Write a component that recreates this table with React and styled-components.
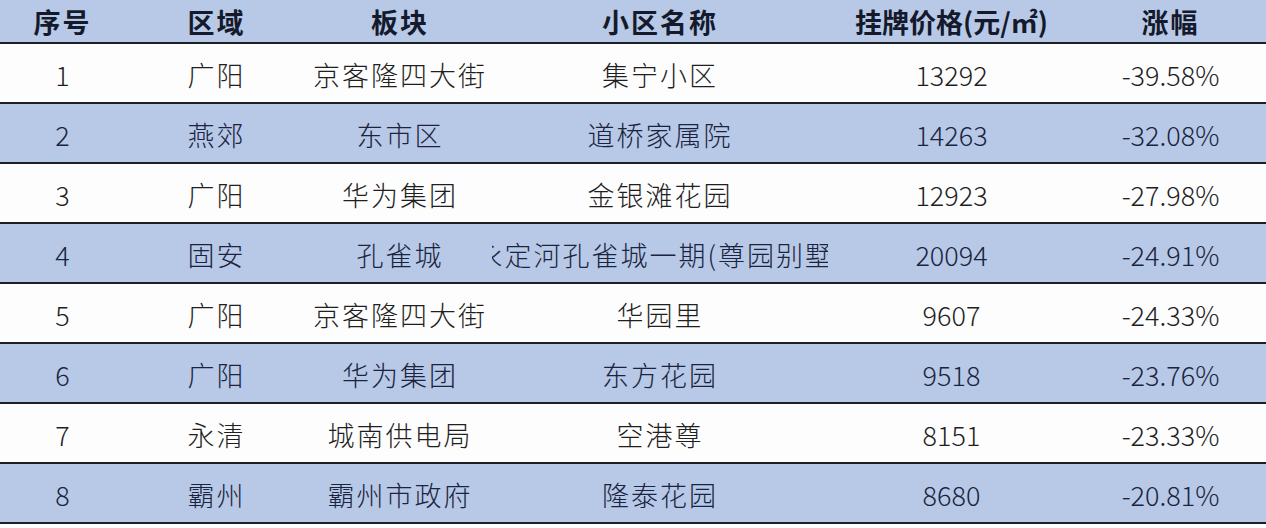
import React from 'react';
import styled, { createGlobalStyle } from 'styled-components';

const GlobalStyle = createGlobalStyle`
  html, body {
    margin: 0;
    padding: 0;
    background: #ffffff;
  }
  body {
    font-family: "Noto Sans CJK SC", "Noto Sans", sans-serif;
  }
`;

const Table = styled.div`
  width: 1266px;
  display: flex;
  flex-direction: column;
`;

const Row = styled.div`
  display: grid;
  grid-template-columns: 125px 183px 184px 336px 247px 191px;
  height: ${(p) => (p.header ? '42px' : '58px')};
  border-bottom: 2px solid #1e1f24;
  background: ${(p) => (p.blue ? '#b7c9e6' : '#fdfdfd')};
  color: ${(p) => (p.header ? '#141a2c' : p.blue ? '#1a2440' : '#1f1f1f')};
  font-weight: ${(p) => (p.header ? 700 : 300)};
`;

const Cell = styled.div`
  display: flex;
  align-items: center;
  justify-content: center;
  overflow: hidden;
  white-space: nowrap;
  font-size: 27px;
  letter-spacing: ${(p) => (p.num ? '0' : '2px')};
  padding-top: ${(p) => (p.up ? '0' : '2px')};
  box-sizing: border-box;
`;

const Inner = styled.span`
  flex-shrink: 0;
`;

const headers = ['序号', '区域', '板块', '小区名称', '挂牌价格(元/㎡)', '涨幅'];

const rows = [
  ['1', '广阳', '京客隆四大街', '集宁小区', '13292', '-39.58%'],
  ['2', '燕郊', '东市区', '道桥家属院', '14263', '-32.08%'],
  ['3', '广阳', '华为集团', '金银滩花园', '12923', '-27.98%'],
  ['4', '固安', '孔雀城', '永定河孔雀城一期(尊园别墅)', '20094', '-24.91%'],
  ['5', '广阳', '京客隆四大街', '华园里', '9607', '-24.33%'],
  ['6', '广阳', '华为集团', '东方花园', '9518', '-23.76%'],
  ['7', '永清', '城南供电局', '空港尊', '8151', '-23.33%'],
  ['8', '霸州', '霸州市政府', '隆泰花园', '8680', '-20.81%'],
];

export default function App() {
  return (
    <>
      <GlobalStyle />
      <Table>
        <Row header blue>
          {headers.map((h, i) => (
            <Cell key={i} up num={i === 4}>
              <Inner>{h}</Inner>
            </Cell>
          ))}
        </Row>
        {rows.map((r, ri) => (
          <Row key={ri} blue={ri % 2 === 1}>
            {r.map((v, ci) => (
              <Cell key={ci} num={ci === 0 || ci === 4 || ci === 5}>
                <Inner>{v}</Inner>
              </Cell>
            ))}
          </Row>
        ))}
      </Table>
    </>
  );
}
